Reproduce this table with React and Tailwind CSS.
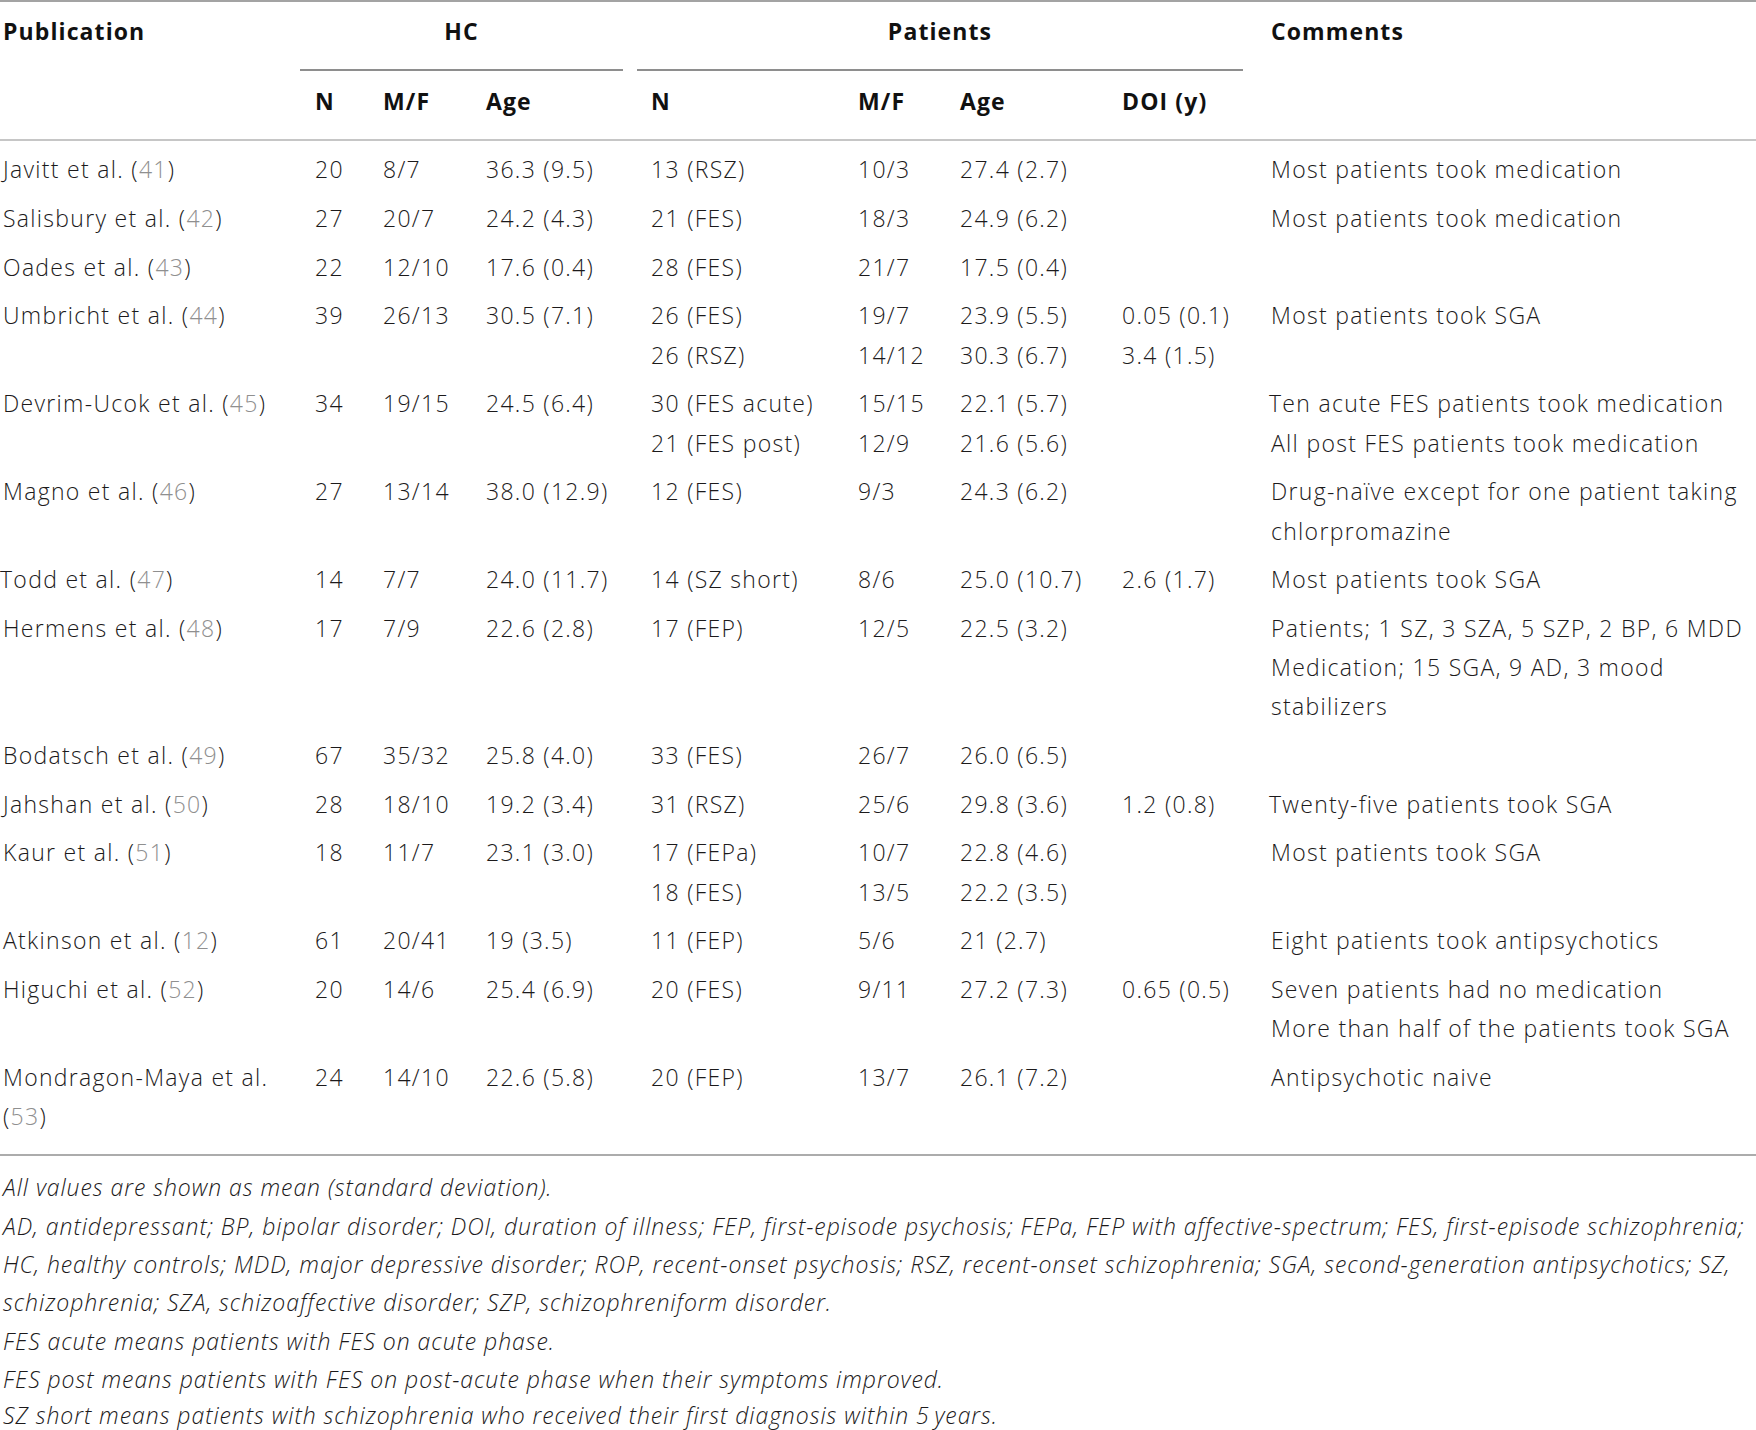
const rows = [
  {
    pub: [["Javitt et al. (", "41", ")"]],
    hc: ["20", "8/7", "36.3 (9.5)"],
    n: ["13 (RSZ)"],
    mf: ["10/3"],
    age: ["27.4 (2.7)"],
    doi: [],
    comments: ["Most patients took medication"],
  },
  {
    pub: [["Salisbury et al. (", "42", ")"]],
    hc: ["27", "20/7", "24.2 (4.3)"],
    n: ["21 (FES)"],
    mf: ["18/3"],
    age: ["24.9 (6.2)"],
    doi: [],
    comments: ["Most patients took medication"],
  },
  {
    pub: [["Oades et al. (", "43", ")"]],
    hc: ["22", "12/10", "17.6 (0.4)"],
    n: ["28 (FES)"],
    mf: ["21/7"],
    age: ["17.5 (0.4)"],
    doi: [],
    comments: [],
  },
  {
    pub: [["Umbricht et al. (", "44", ")"]],
    hc: ["39", "26/13", "30.5 (7.1)"],
    n: ["26 (FES)", "26 (RSZ)"],
    mf: ["19/7", "14/12"],
    age: ["23.9 (5.5)", "30.3 (6.7)"],
    doi: ["0.05 (0.1)", "3.4 (1.5)"],
    comments: ["Most patients took SGA"],
  },
  {
    pub: [["Devrim-Ucok et al. (", "45", ")"]],
    hc: ["34", "19/15", "24.5 (6.4)"],
    n: ["30 (FES acute)", "21 (FES post)"],
    mf: ["15/15", "12/9"],
    age: ["22.1 (5.7)", "21.6 (5.6)"],
    doi: [],
    comments: ["Ten acute FES patients took medication", "All post FES patients took medication"],
    shiftFirst: true,
  },
  {
    pub: [["Magno et al. (", "46", ")"]],
    hc: ["27", "13/14", "38.0 (12.9)"],
    n: ["12 (FES)"],
    mf: ["9/3"],
    age: ["24.3 (6.2)"],
    doi: [],
    comments: ["Drug-naïve except for one patient taking", "chlorpromazine"],
  },
  {
    pub: [["Todd et al. (", "47", ")"]],
    pubShift: true,
    hc: ["14", "7/7", "24.0 (11.7)"],
    n: ["14 (SZ short)"],
    mf: ["8/6"],
    age: ["25.0 (10.7)"],
    doi: ["2.6 (1.7)"],
    comments: ["Most patients took SGA"],
  },
  {
    pub: [["Hermens et al. (", "48", ")"]],
    hc: ["17", "7/9", "22.6 (2.8)"],
    n: ["17 (FEP)"],
    mf: ["12/5"],
    age: ["22.5 (3.2)"],
    doi: [],
    comments: [
      "Patients; 1 SZ, 3 SZA, 5 SZP, 2 BP, 6 MDD",
      "Medication; 15 SGA, 9 AD, 3 mood",
      "stabilizers",
    ],
  },
  {
    pub: [["Bodatsch et al. (", "49", ")"]],
    hc: ["67", "35/32", "25.8 (4.0)"],
    n: ["33 (FES)"],
    mf: ["26/7"],
    age: ["26.0 (6.5)"],
    doi: [],
    comments: [],
  },
  {
    pub: [["Jahshan et al. (", "50", ")"]],
    hc: ["28", "18/10", "19.2 (3.4)"],
    n: ["31 (RSZ)"],
    mf: ["25/6"],
    age: ["29.8 (3.6)"],
    doi: ["1.2 (0.8)"],
    comments: ["Twenty-five patients took SGA"],
    shiftFirst: true,
  },
  {
    pub: [["Kaur et al. (", "51", ")"]],
    hc: ["18", "11/7", "23.1 (3.0)"],
    n: ["17 (FEPa)", "18 (FES)"],
    mf: ["10/7", "13/5"],
    age: ["22.8 (4.6)", "22.2 (3.5)"],
    doi: [],
    comments: ["Most patients took SGA"],
  },
  {
    pub: [["Atkinson et al. (", "12", ")"]],
    hc: ["61", "20/41", "19 (3.5)"],
    n: ["11 (FEP)"],
    mf: ["5/6"],
    age: ["21 (2.7)"],
    doi: [],
    comments: ["Eight patients took antipsychotics"],
  },
  {
    pub: [["Higuchi et al. (", "52", ")"]],
    hc: ["20", "14/6", "25.4 (6.9)"],
    n: ["20 (FES)"],
    mf: ["9/11"],
    age: ["27.2 (7.3)"],
    doi: ["0.65 (0.5)"],
    comments: ["Seven patients had no medication", "More than half of the patients took SGA"],
  },
  {
    pub: [["Mondragon-Maya et al.", "", ""], ["(", "53", ")"]],
    hc: ["24", "14/10", "22.6 (5.8)"],
    n: ["20 (FEP)"],
    mf: ["13/7"],
    age: ["26.1 (7.2)"],
    doi: [],
    comments: ["Antipsychotic naive"],
  },
];

const footnotes = [
  "All values are shown as mean (standard deviation).",
  "AD, antidepressant; BP, bipolar disorder; DOI, duration of illness; FEP, first-episode psychosis; FEPa, FEP with affective-spectrum; FES, first-episode schizophrenia;",
  "HC, healthy controls; MDD, major depressive disorder; ROP, recent-onset psychosis; RSZ, recent-onset schizophrenia; SGA, second-generation antipsychotics; SZ,",
  "schizophrenia; SZA, schizoaffective disorder; SZP, schizophreniform disorder.",
  "FES acute means patients with FES on acute phase.",
  "FES post means patients with FES on post-acute phase when their symptoms improved.",
  "SZ short means patients with schizophrenia who received their first diagnosis within 5\u2009years.",
];

const cols =
  "grid grid-cols-[300px_68px_103px_166px_206px_102px_162px_150px_1fr]";

function Lines({ items, className = "" }) {
  return (
    <div className={className}>
      {items.map((t, i) => (
        <div key={i} className="whitespace-nowrap">
          {t}
        </div>
      ))}
    </div>
  );
}

function Row({ row }) {
  return (
    <div className={`${cols} py-[4.7px]`}>
      <div className={row.pubShift ? "pl-0" : "pl-[3px]"}>
        {row.pub.map(([a, ref, b], i) => (
          <div key={i} className="whitespace-nowrap">
            {a}
            <span className="text-[#8f8f8f]">{ref}</span>
            {b}
          </div>
        ))}
      </div>
      <Lines items={[row.hc[0]]} className="pl-[15px]" />
      <Lines items={[row.hc[1]]} className="pl-[15px]" />
      <Lines items={[row.hc[2]]} className="pl-[15px]" />
      <Lines items={row.n} className="pl-[14px]" />
      <Lines items={row.mf} className="pl-[15px]" />
      <Lines items={row.age} className="pl-[15px]" />
      <Lines items={row.doi} className="pl-[15px]" />
      <div className="pl-[14px]">
        {row.comments.map((t, i) => (
          <div
            key={i}
            className={`whitespace-nowrap ${row.shiftFirst && i === 0 ? "-ml-[2px]" : ""}`}
          >
            {t}
          </div>
        ))}
      </div>
    </div>
  );
}

export default function App() {
  return (
    <div className="w-[1756px] h-[1430px] overflow-hidden bg-white text-[#1c1a1b] font-['Open_Sans','Liberation_Sans',sans-serif] font-light text-[23px] leading-[39.3px] tracking-[1.3px]">
      <div className="border-t-2 border-[#a3a3a3]" />

      <div className="border-b-2 border-[#c6c6c6] font-bold text-[23px] tracking-[1.1px] text-[#111]">
        <div className={`${cols} pt-[10px]`}>
          <div className="pl-[3px]">Publication</div>
          <div className="col-span-3 pr-[14px]">
            <div className="text-center">HC</div>
            <div className="mt-[18px] border-b-2 border-[#8e8e8e]" />
          </div>
          <div className="col-span-4 pr-[14px]">
            <div className="text-center">Patients</div>
            <div className="mt-[18px] border-b-2 border-[#8e8e8e]" />
          </div>
          <div className="pl-[14px]">Comments</div>
        </div>
        <div className={`${cols} pt-[11px] pb-[17px]`}>
          <div />
          <div className="pl-[15px]">N</div>
          <div className="pl-[15px]">M/F</div>
          <div className="pl-[15px]">Age</div>
          <div className="pl-[14px]">N</div>
          <div className="pl-[15px]">M/F</div>
          <div className="pl-[15px]">Age</div>
          <div className="pl-[15px]">DOI (y)</div>
          <div />
        </div>
      </div>

      <div className="pt-[5px] pb-[13px] border-b-2 border-[#acacac]">
        {rows.map((r, i) => (
          <Row key={i} row={r} />
        ))}
      </div>

      <div className="pt-[12px] pl-[3px] italic tracking-[0.95px] leading-[38.3px]">
        {footnotes.map((t, i) => (
          <p
            key={i}
            className={`whitespace-nowrap ${i === footnotes.length - 1 ? "mt-[3px] leading-[28px]" : ""}`}
          >
            {t}
          </p>
        ))}
      </div>
    </div>
  );
}
